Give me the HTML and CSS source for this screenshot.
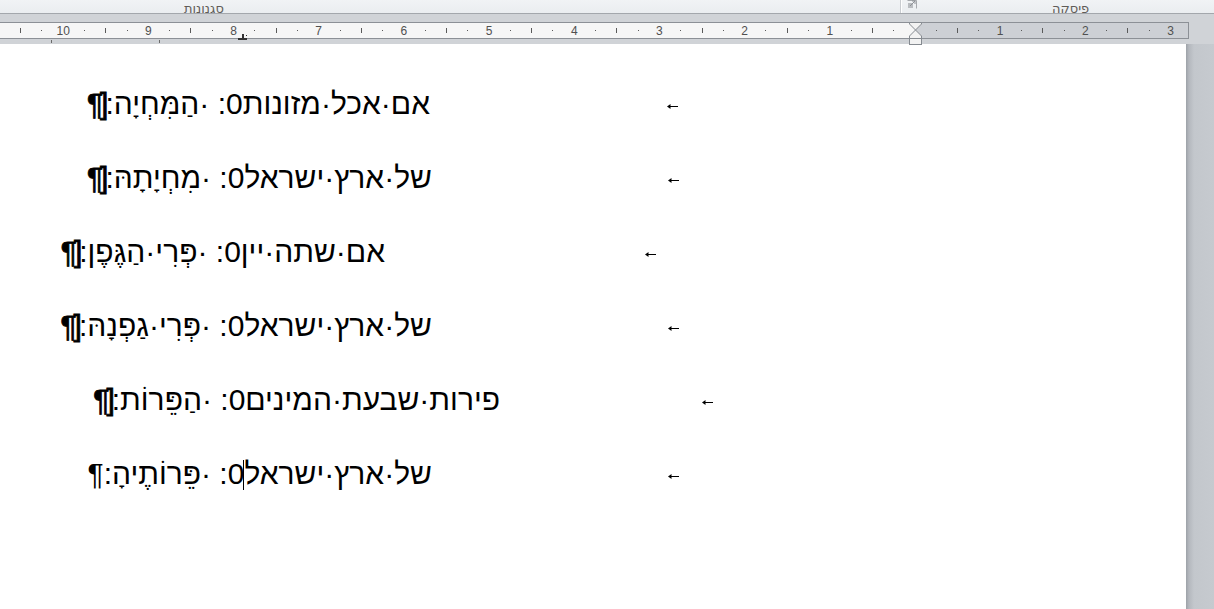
FILE: index.html
```html
<!DOCTYPE html>
<html lang="he">
<head>
    <meta charset="UTF-8">
    <meta name="viewport" content="width=device-width, initial-scale=1.0">
    <title>מסמך</title>
    <link rel="stylesheet" href="styles.css">
    <script>
    // ruler marks: every 4th slot is a number, every 2nd a tick, the rest dots
    function buildRuler(id, count) {
        const el = document.getElementById(id);
        for (let i = 1; i <= count; i++) {
            const slot = document.createElement('span');
            slot.className = 'slot';
            const mark = document.createElement('span');
            if (i % 4 === 0) {
                mark.className = 'num';
                mark.textContent = i / 4;
            } else if (i % 2 === 0) {
                mark.className = 'tick';
            } else {
                mark.className = 'dot';
            }
            slot.appendChild(mark);
            el.appendChild(slot);
        }
    }

    window.onload = function() {
        buildRuler('rulerText', 44);
        buildRuler('rulerMargin', 13);
    };
    </script>
</head>
<body>
    <div class="ribbon">
        <div class="group group-styles">
            <span class="group-label">סגנונות</span>
        </div>
        <div class="group group-para">
            <svg class="launcher" width="10" height="9" viewBox="0 0 10 9">
                <path d="M0.5 0.5 H9.5 V8.5" fill="none" stroke="#a6a9ad"/>
                <rect x="1" y="3" width="5" height="5" fill="#b9bcc0"/>
                <path d="M3 6 L8 1 M5 1 H8 V4" fill="none" stroke="#8f9297"/>
            </svg>
            <span class="group-label">פיסקה</span>
        </div>
    </div>

    <div class="ruler-strip">
        <div class="ruler">
            <div class="ruler-text" id="rulerText"></div>
            <div class="ruler-margin" id="rulerMargin"></div>
        </div>
        <span class="default-tab first"></span>
        <span class="default-tab second"></span>
        <span class="decimal-tab"><span class="decimal-dot"></span></span>
        <svg class="indent-marker" width="13" height="23" viewBox="0 0 13 23">
            <path d="M0.5 0.5 H12.5 V2 L6.5 8 L0.5 2 Z" fill="#f2f2f2" stroke="#858a90"/>
            <path d="M6.5 8 L12.5 14 V16.5 H0.5 V14 Z" fill="#f2f2f2" stroke="#858a90"/>
            <rect x="0.5" y="16.5" width="12" height="6" fill="#f2f2f2" stroke="#858a90"/>
        </svg>
    </div>

    <div class="workspace">
        <div class="page">
            <div class="doc">
                <p class="para">
                    <span class="tab tab-a"><svg class="tab-arrow" width="11" height="5" viewBox="0 0 11 5"><path d="M0 2.5 L3.5 0 V5 Z" fill="#000"/><rect x="2" y="2" width="9" height="1" fill="#000"/></svg></span>
                    <span class="text">אם·אכל·מזונות0: ·הַמִּחְיָה:<span class="mark" dir="ltr">¶]</span></span>
                </p>
                <p class="para">
                    <span class="tab tab-b"><svg class="tab-arrow" width="11" height="5" viewBox="0 0 11 5"><path d="M0 2.5 L3.5 0 V5 Z" fill="#000"/><rect x="2" y="2" width="9" height="1" fill="#000"/></svg></span>
                    <span class="text">של·ארץ·ישראל0: ·מִחְיָתָהּ:<span class="mark" dir="ltr">¶]</span></span>
                </p>
                <p class="para">
                    <span class="tab tab-c"><svg class="tab-arrow" width="11" height="5" viewBox="0 0 11 5"><path d="M0 2.5 L3.5 0 V5 Z" fill="#000"/><rect x="2" y="2" width="9" height="1" fill="#000"/></svg></span>
                    <span class="text">אם·שתה·יין0: ·פְּרִי·הַגֶּפֶן:<span class="mark" dir="ltr">¶]</span></span>
                </p>
                <p class="para">
                    <span class="tab tab-b"><svg class="tab-arrow" width="11" height="5" viewBox="0 0 11 5"><path d="M0 2.5 L3.5 0 V5 Z" fill="#000"/><rect x="2" y="2" width="9" height="1" fill="#000"/></svg></span>
                    <span class="text">של·ארץ·ישראל0: ·פְּרִי·גַפְנָהּ:<span class="mark" dir="ltr">¶]</span></span>
                </p>
                <p class="para">
                    <span class="tab tab-d"><svg class="tab-arrow" width="11" height="5" viewBox="0 0 11 5"><path d="M0 2.5 L3.5 0 V5 Z" fill="#000"/><rect x="2" y="2" width="9" height="1" fill="#000"/></svg></span>
                    <span class="text">פירות·שבעת·המינים0: ·הַפֵּרוֹת:<span class="mark" dir="ltr">¶]</span></span>
                </p>
                <p class="para">
                    <span class="tab tab-b"><svg class="tab-arrow" width="11" height="5" viewBox="0 0 11 5"><path d="M0 2.5 L3.5 0 V5 Z" fill="#000"/><rect x="2" y="2" width="9" height="1" fill="#000"/></svg></span>
                    <span class="text">של·ארץ·ישראל<span class="caret"></span>0: ·פֵּרוֹתֶיהָ:<span class="mark plain">¶</span></span>
                </p>
            </div>
        </div>
        <div class="side"></div>
    </div>
</body>
</html>
```

FILE: styles.css
```css
body {
    margin: 0;
    padding: 0;
    width: 1214px;
    height: 609px;
    overflow: hidden;
    background-color: #c7cbd0;
    font-family: "Liberation Sans", "DejaVu Sans", sans-serif;
}

/* ribbon bottom edge with the group names */
.ribbon {
    display: flex;
    height: 13px;
    background: linear-gradient(#f1f3f5, #eaedf0);
    overflow: hidden;
}

.group {
    display: flex;
    align-items: flex-end;
    height: 13px;
}

.group-styles {
    width: 901px;
    padding-left: 184px;
    box-sizing: border-box;
    border-right: 1px solid #c9ccd0;
    box-shadow: 1px 0 0 #ffffff;
}

.group-para {
    flex: 1;
    padding-left: 6px;
}

.group-label {
    font-family: "DejaVu Sans", sans-serif;
    font-size: 13px;
    line-height: 13px;
    color: #605c58;
    position: relative;
    top: 2px;
}

.group-para .group-label {
    margin-left: 135px;
}

.launcher {
    align-self: flex-start;
}

/* ruler */
.ruler-strip {
    position: relative;
    height: 31px;
    border-top: 1px solid #a3a7ac;
    background-color: #d0d3d7;
    padding-top: 8px;
    box-sizing: border-box;
}

.ruler {
    display: flex;
    width: 1189px;
    height: 17px;
    box-sizing: border-box;
    border-top: 1px solid #8c9096;
    border-bottom: 1px solid #8c9096;
    border-right: 1px solid #8c9096;
}

.ruler-text {
    display: flex;
    direction: rtl;
    width: 915px;
    padding-right: 10.65px;
    box-sizing: border-box;
    overflow: hidden;
    background-color: #f6f6f6;
}

.ruler-margin {
    display: flex;
    flex: 1;
    padding-left: 10.65px;
    overflow: hidden;
    background-color: #cdd0d5;
}

.slot {
    flex: 0 0 21.3px;
    display: flex;
    justify-content: center;
    align-items: center;
}

.dot {
    width: 1px;
    height: 1px;
    background-color: #5a5a5a;
}

.tick {
    width: 1px;
    height: 5px;
    background-color: #5a5a5a;
}

.num {
    font-size: 12px;
    line-height: 12px;
    color: #505050;
}

.indent-marker {
    position: absolute;
    left: 909px;
    top: 8px;
}

.default-tab {
    position: absolute;
    top: 26px;
    width: 1px;
    height: 3px;
    background-color: #6b6b6b;
}

.default-tab.first {
    left: 51px;
}

.default-tab.second {
    left: 159px;
}

.decimal-tab {
    position: absolute;
    left: 238px;
    top: 20px;
    width: 9px;
    height: 4px;
    border-bottom: 2px solid #333333;
}

.decimal-tab::before {
    content: "";
    position: absolute;
    left: 4px;
    top: 0;
    width: 2px;
    height: 4px;
    background-color: #333333;
}

.decimal-dot {
    position: absolute;
    left: 8px;
    top: 1px;
    width: 1px;
    height: 1px;
    background-color: #333333;
}

/* document area */
.workspace {
    display: flex;
    height: 565px;
}

.page {
    width: 1186px;
    background-color: #ffffff;
}

.side {
    flex: 1;
    background: linear-gradient(to right, #9da2a8 0, #b4b8be 3px, #c3c7cc 8px, #c6cacf 100%);
}

.doc {
    direction: rtl;
    padding-top: 23px;
    padding-right: 271px;
}

.para {
    display: flex;
    align-items: center;
    height: 74px;
    margin: 0;
    font-size: 30px;
    color: #000000;
    white-space: nowrap;
}

.tab {
    display: flex;
    justify-content: center;
    align-items: center;
    flex: 0 0 auto;
    padding-top: 4px;
}

.tab-a {
    width: 485px;
}

.tab-b {
    width: 483px;
}

.tab-c {
    width: 530px;
}

.tab-d {
    width: 415px;
}

.text {
    line-height: normal;
}

.mark {
    unicode-bidi: isolate;
    letter-spacing: -3px;
    -webkit-text-stroke: 0.8px #000000;
}

.mark.plain {
    letter-spacing: 0;
    -webkit-text-stroke: 0;
}

.caret {
    display: inline-block;
    width: 0;
    height: 30px;
    border-left: 1px solid #000000;
    margin-left: -1px;
    vertical-align: -6px;
}
```
